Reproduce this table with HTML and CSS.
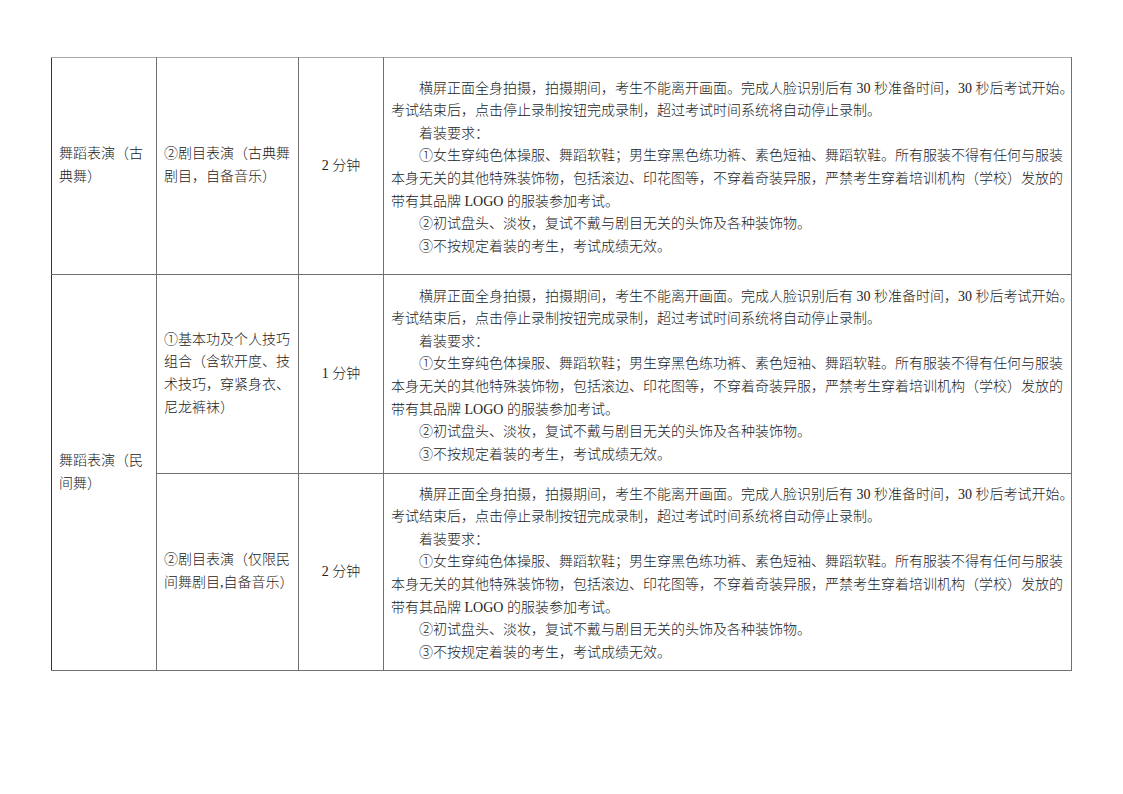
FILE: index.html
```html
<!DOCTYPE html>
<html lang="zh">
<head>
<meta charset="utf-8">
<link rel="stylesheet" href="styles.css">
</head>
<body>
<table class="grid">
  <colgroup>
    <col class="c1"><col class="c2"><col class="c3"><col class="c4">
  </colgroup>
  <tr class="r1">
    <td class="cat">舞蹈表演（古<br>典舞）</td>
    <td class="item">②剧目表演（古典舞<br>剧目，自备音乐）</td>
    <td class="time">2 分钟</td>
    <td class="desc">
      <p class="ind">横屏正面全身拍摄，拍摄期间，考生不能离开画面。完成人脸识别后有 30 秒准备时间，30 秒后考试开始。<br>考试结束后，点击停止录制按钮完成录制，超过考试时间系统将自动停止录制。</p>
      <p class="ind">着装要求：</p>
      <p class="ind">①女生穿纯色体操服、舞蹈软鞋；男生穿黑色练功裤、素色短袖、舞蹈软鞋。所有服装不得有任何与服装<br>本身无关的其他特殊装饰物，包括滚边、印花图等，不穿着奇装异服，严禁考生穿着培训机构（学校）发放的<br>带有其品牌 LOGO 的服装参加考试。</p>
      <p class="ind">②初试盘头、淡妆，复试不戴与剧目无关的头饰及各种装饰物。</p>
      <p class="ind">③不按规定着装的考生，考试成绩无效。</p>
    </td>
  </tr>
  <tr class="r2">
    <td class="cat" rowspan="2">舞蹈表演（民<br>间舞）</td>
    <td class="item">①基本功及个人技巧<br>组合（含软开度、技<br>术技巧，穿紧身衣、<br>尼龙裤袜）</td>
    <td class="time">1 分钟</td>
    <td class="desc">
      <p class="ind">横屏正面全身拍摄，拍摄期间，考生不能离开画面。完成人脸识别后有 30 秒准备时间，30 秒后考试开始。<br>考试结束后，点击停止录制按钮完成录制，超过考试时间系统将自动停止录制。</p>
      <p class="ind">着装要求：</p>
      <p class="ind">①女生穿纯色体操服、舞蹈软鞋；男生穿黑色练功裤、素色短袖、舞蹈软鞋。所有服装不得有任何与服装<br>本身无关的其他特殊装饰物，包括滚边、印花图等，不穿着奇装异服，严禁考生穿着培训机构（学校）发放的<br>带有其品牌 LOGO 的服装参加考试。</p>
      <p class="ind">②初试盘头、淡妆，复试不戴与剧目无关的头饰及各种装饰物。</p>
      <p class="ind">③不按规定着装的考生，考试成绩无效。</p>
    </td>
  </tr>
  <tr class="r3">
    <td class="item">②剧目表演（仅限民<br>间舞剧目,自备音乐）</td>
    <td class="time">2 分钟</td>
    <td class="desc">
      <p class="ind">横屏正面全身拍摄，拍摄期间，考生不能离开画面。完成人脸识别后有 30 秒准备时间，30 秒后考试开始。<br>考试结束后，点击停止录制按钮完成录制，超过考试时间系统将自动停止录制。</p>
      <p class="ind">着装要求：</p>
      <p class="ind">①女生穿纯色体操服、舞蹈软鞋；男生穿黑色练功裤、素色短袖、舞蹈软鞋。所有服装不得有任何与服装<br>本身无关的其他特殊装饰物，包括滚边、印花图等，不穿着奇装异服，严禁考生穿着培训机构（学校）发放的<br>带有其品牌 LOGO 的服装参加考试。</p>
      <p class="ind">②初试盘头、淡妆，复试不戴与剧目无关的头饰及各种装饰物。</p>
      <p class="ind">③不按规定着装的考生，考试成绩无效。</p>
    </td>
  </tr>
</table>
</body>
</html>
```

FILE: styles.css
```css
html, body {
  margin: 0;
  padding: 0;
  background: #ffffff;
}
body {
  padding: 57px 0 0 51px;
  font-family: "Liberation Serif", "Noto Sans CJK SC", serif;
  font-size: 14px;
  font-weight: 300;
  color: #222222;
}
.grid {
  border-collapse: collapse;
  table-layout: fixed;
  width: 1020px;
}
.c1 { width: 105px; }
.c2 { width: 142px; }
.c3 { width: 85px; }
.c4 { width: 688px; }
.grid td {
  border: 1px solid #707070;
  vertical-align: middle;
  line-height: 22.6px;
  padding: 0 4px 0 7px;
  white-space: nowrap;
}
.grid tr.r1 td { border-top-color: #a8a8a8; }
.grid td.cat { border-left-color: #333333; }
.grid tr.r2 td { border-top: 1px solid #404040; }
.r1 { height: 217px; }
.r2 { height: 199px; }
.r3 { height: 197px; }
.grid td.time {
  text-align: center;
  padding: 0;
}
.grid td.desc {
  padding-top: 4px;
}
.ind {
  margin: 0;
  text-indent: 2em;
}
```
